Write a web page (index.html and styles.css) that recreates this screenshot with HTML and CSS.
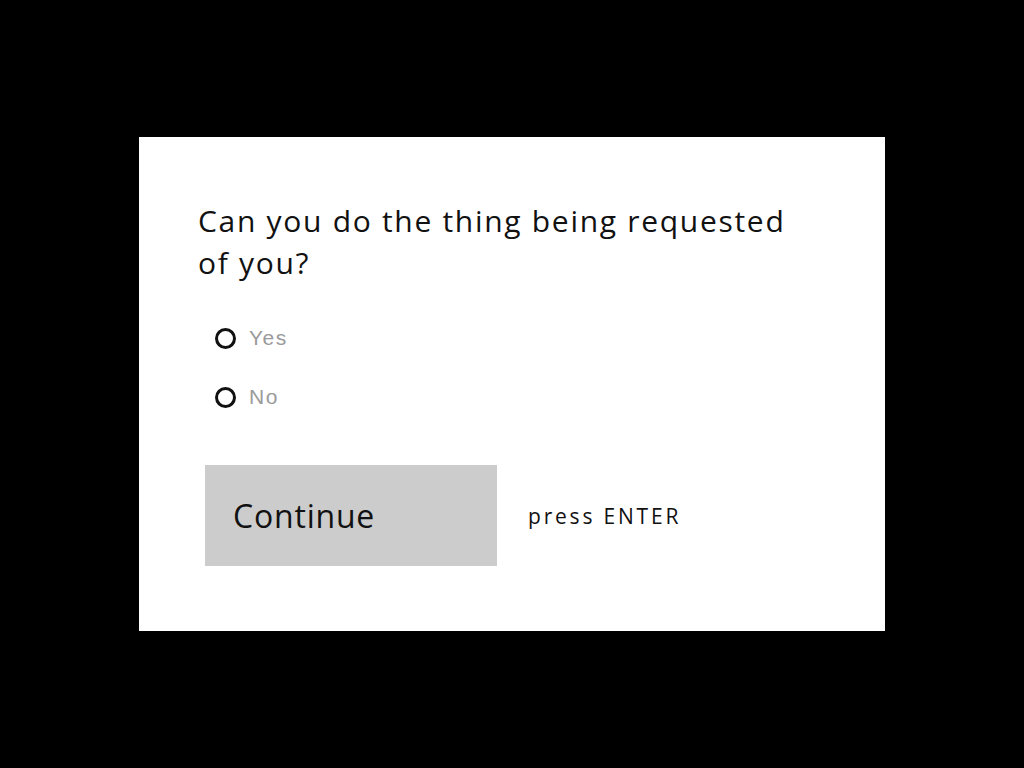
FILE: index.html
```html
<!DOCTYPE html>
<html>
<head>
<meta charset="utf-8">
<link rel="stylesheet" href="styles.css">
</head>
<body>
<div class="card">
  <h1 class="question">Can you do the thing being requested of you?</h1>
  <div class="options">
    <label class="option"><span class="radio"></span><span class="opt-text">Yes</span></label>
    <label class="option"><span class="radio"></span><span class="opt-text">No</span></label>
  </div>
  <div class="actions">
    <button class="continue">Continue</button>
    <span class="hint">press ENTER</span>
  </div>
</div>
</body>
</html>
```
FILE: styles.css
```css
html, body {
  margin: 0;
  padding: 0;
  background: #000;
  width: 1024px;
  height: 768px;
}
body {
  display: flex;
  align-items: flex-start;
  justify-content: flex-start;
  padding: 137px 0 0 139px;
  box-sizing: border-box;
}
.card {
  width: 746px;
  height: 494px;
  background: #fff;
  box-sizing: border-box;
  padding: 63px 60px 0 59px;
  font-family: "Open Sans", sans-serif;
  color: #111;
}
.question {
  margin: 0;
  font-weight: 400;
  font-size: 30px;
  line-height: 42px;
  width: 610px;
  letter-spacing: 1.7px;
}
.options {
  display: flex;
  flex-direction: column;
  gap: 27px;
  margin-top: 38px;
  padding-left: 17px;
}
.option {
  display: flex;
  align-items: center;
  gap: 13px;
  height: 32px;
}
.radio {
  width: 15px;
  height: 15px;
  border: 3px solid #111;
  border-radius: 50%;
}
.opt-text {
  font-family: "Liberation Sans", Arial, sans-serif;
  font-size: 21px;
  letter-spacing: 1.5px;
  color: #9a9a9a;
}
.actions {
  display: flex;
  align-items: center;
  margin-top: 52px;
  padding-left: 7px;
}
.continue {
  width: 292px;
  height: 101px;
  background: #cccccc;
  border: none;
  padding: 0 0 0 28px;
  text-align: left;
  font-family: "Open Sans", sans-serif;
  font-size: 32px;
  color: #111;
  letter-spacing: 0.8px;
}
.hint {
  margin-left: 31px;
  font-size: 21px;
  letter-spacing: 2.8px;
  color: #111;
}
```
